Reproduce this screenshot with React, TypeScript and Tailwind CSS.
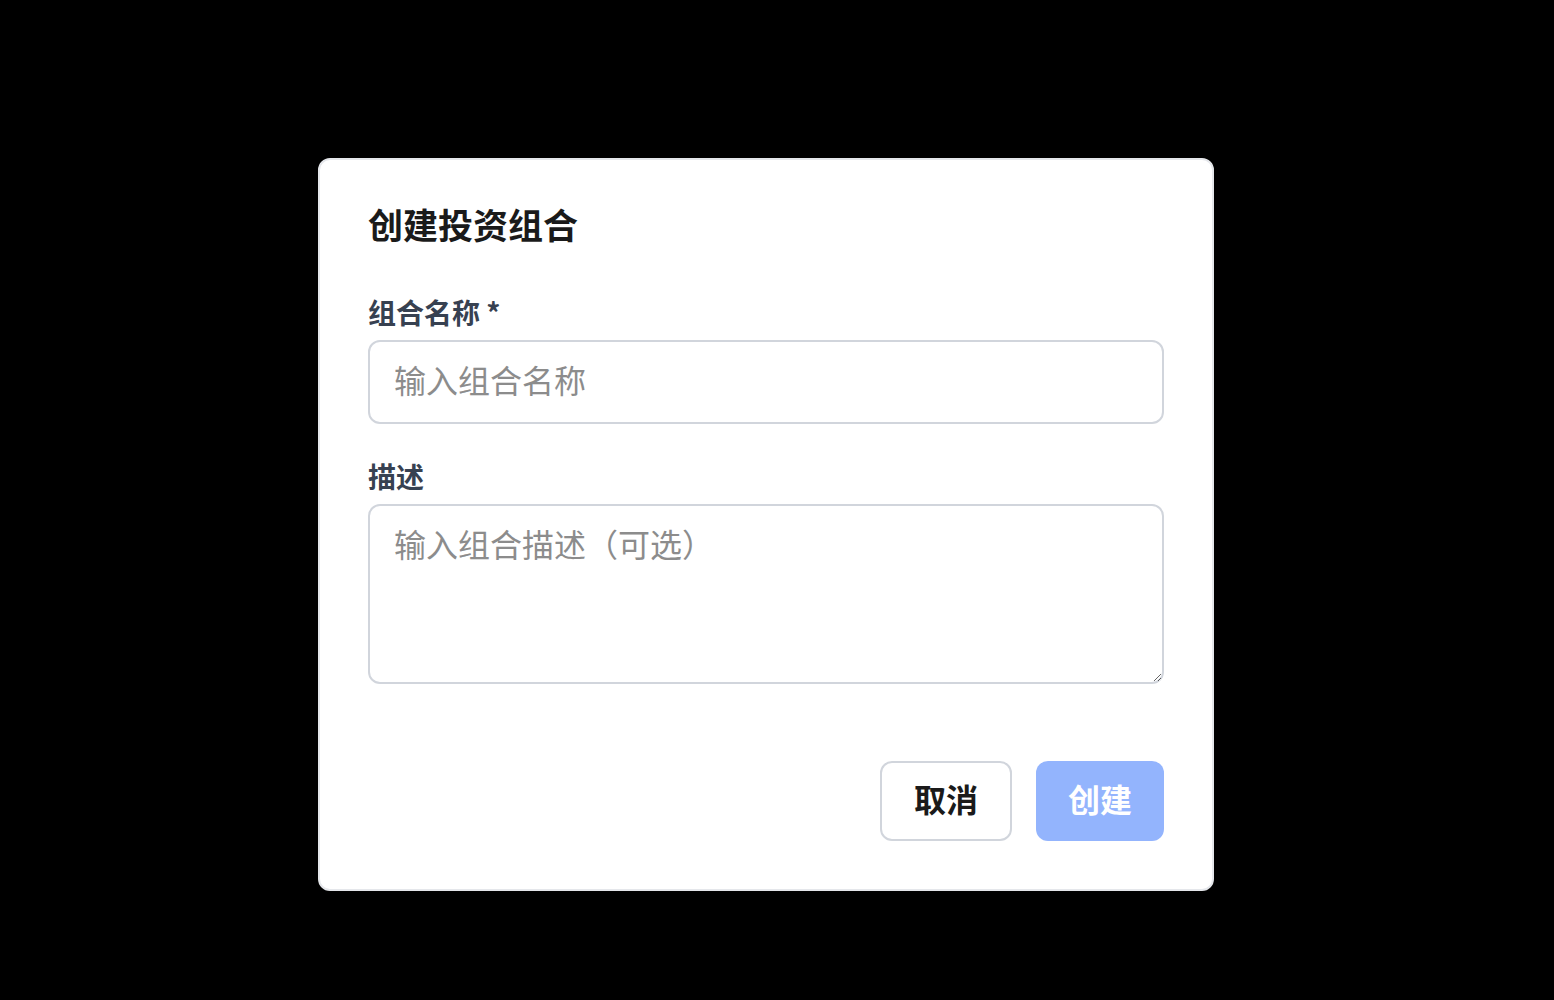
import React from "react";

const font = { fontFamily: '"Noto Sans CJK SC", "Noto Sans", sans-serif' };

const App: React.FC = () => {
  return (
    <div className="min-h-screen w-full bg-black pt-[158px] pl-[318px]" style={font}>
      <div className="w-[896px] rounded-[12px] border-2 border-gray-200 bg-white p-12">
        <h2 className="mb-[52px] text-[35px] font-bold leading-[32px] text-[#1a1a1a]">创建投资组合</h2>

        <label className="mb-2 block text-[28px] font-semibold leading-[40px] text-[#374151]">组合名称 *</label>
        <input
          type="text"
          placeholder="输入组合名称"
          className="mb-8 block w-full rounded-[12px] border-2 border-gray-300 px-6 pt-[13px] pb-[19px] text-[32px] leading-[48px] text-gray-900 placeholder:text-[#8c8c8c] focus:outline-none"
        />

        <label className="mb-2 block text-[28px] font-semibold leading-[40px] text-[#374151]">描述</label>
        <textarea
          rows={3}
          placeholder="输入组合描述（可选）"
          className="block w-full rounded-[12px] border-2 border-gray-300 px-6 pt-[13px] pb-[19px] text-[32px] leading-[48px] text-gray-900 placeholder:text-[#8c8c8c] focus:outline-none"
        />

        <div className="mt-[77px] flex justify-end gap-6">
          <button
            type="button"
            className="rounded-[12px] border-2 border-gray-300 bg-white px-8 pt-[11px] pb-[17px] text-[32px] font-semibold leading-[48px] text-[#1a1a1a]"
          >
            取消
          </button>
          <button
            type="button"
            className="rounded-[12px] bg-[#93b4fd] px-8 pt-[13px] pb-[19px] text-[32px] font-semibold leading-[48px] text-white"
          >
            创建
          </button>
        </div>
      </div>
    </div>
  );
};

export default App;
